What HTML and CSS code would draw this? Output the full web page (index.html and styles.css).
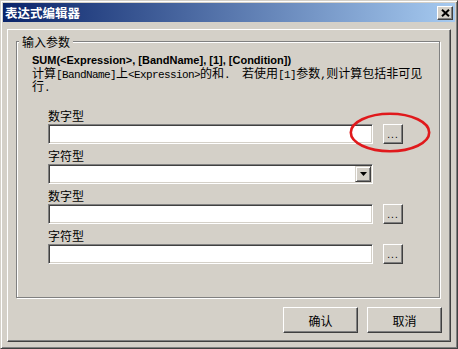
FILE: index.html
```html
<!DOCTYPE html>
<html lang="zh">
<head>
<meta charset="utf-8">
<title>表达式编辑器</title>
<link rel="stylesheet" href="styles.css">
</head>
<body>
<div class="window">
  <div class="titlebar">
    <span class="title">表达式编辑器</span>
    <button class="close" aria-label="关闭">
      <svg width="9" height="8" viewBox="0 0 9 8"><path d="M1 0.8 L8 7.2 M8 0.8 L1 7.2" stroke="#000" stroke-width="2" fill="none"/></svg>
    </button>
  </div>
  <div class="panel">
    <div class="group">
      <div class="legend">输入参数</div>
      <div class="sig">SUM(&lt;Expression&gt;, [BandName], [1], [Condition])</div>
      <div class="help">计算<span class="code">[BandName]</span>上<span class="code">&lt;Expression&gt;</span>的和<span class="code">.&nbsp; </span>若使用<span class="code">[1]</span>参数<span class="code">,</span>则计算包括非可见行<span class="code">.</span></div>
      <div class="fields">
        <div class="field">
          <div class="label">数字型</div>
          <div class="row"><div class="input"></div><button class="btn browse">...</button></div>
        </div>
        <div class="field">
          <div class="label">字符型</div>
          <div class="row"><div class="input combo"><span class="combo-btn"><svg width="7" height="4" viewBox="0 0 7 4"><path d="M0 0 H7 L3.5 4 Z" fill="#000"/></svg></span></div></div>
        </div>
        <div class="field">
          <div class="label">数字型</div>
          <div class="row"><div class="input"></div><button class="btn browse">...</button></div>
        </div>
        <div class="field">
          <div class="label">字符型</div>
          <div class="row"><div class="input"></div><button class="btn browse">...</button></div>
        </div>
      </div>
    </div>
    <div class="actions">
      <button class="btn action">确认</button>
      <button class="btn action">取消</button>
    </div>
  </div>
  <svg class="annot" width="82" height="41" viewBox="0 0 82 41"><ellipse cx="41" cy="20.5" rx="39.2" ry="18.7" fill="none" stroke="#e0191c" stroke-width="2.6"/></svg>
</div>
</body>
</html>
```
FILE: styles.css
```css
html, body {
  margin: 0;
  padding: 0;
  background: #d4d0c8;
}
body {
  font-family: "Noto Sans CJK SC", "Liberation Sans", sans-serif;
  font-size: 12px;
  color: #000;
}
.window {
  position: relative;
  width: 458px;
  height: 349px;
  box-sizing: border-box;
  border: 1px solid;
  border-color: #d4d0c8 #404040 #404040 #d4d0c8;
  box-shadow: inset 1px 1px #fff, inset -1px -1px #808080;
  padding: 2px;
  display: flex;
  flex-direction: column;
  background: #d4d0c8;
}
.titlebar {
  flex: none;
  height: 19px;
  display: flex;
  align-items: center;
  justify-content: space-between;
  padding: 0 2px;
  background: linear-gradient(to right, #0a246a, #a6caf0);
}
.title {
  color: #fff;
  font-weight: bold;
  font-size: 12.5px;
  line-height: 19px;
}
.close {
  width: 16px;
  height: 14px;
  padding: 0;
  margin: 0;
  border: 1px solid;
  border-color: #fff #404040 #404040 #fff;
  box-shadow: inset -1px -1px #808080;
  background: #d4d0c8;
  display: flex;
  align-items: center;
  justify-content: center;
}
.close svg { display: block; }
.panel {
  flex: 1;
  margin: 7px 4px 4px;
  border: 1px solid;
  border-color: #fff #404040 #404040 #fff;
  box-shadow: inset -1px -1px #808080;
  display: flex;
  flex-direction: column;
}
.group {
  position: relative;
  flex: none;
  height: 257px;
  box-sizing: border-box;
  margin: 11px 10px 0 8px;
  border: 1px solid #808080;
  box-shadow: inset 1px 1px #fff, 1px 1px #fff;
  padding: 12px 14px 0 15px;
}
.legend {
  position: absolute;
  top: -7px;
  left: 2px;
  padding: 0 3px;
  background: #d4d0c8;
  line-height: 14px;
}
.sig {
  font-family: "Liberation Sans", sans-serif;
  font-weight: bold;
  font-size: 11px;
  line-height: 12px;
  height: 12px;
}
.help {
  margin-top: 1px;
  line-height: 12px;
  height: 24px;
}
.code {
  font-family: "Liberation Mono", monospace;
  font-size: 11px;
  letter-spacing: -0.6px;
  line-height: 10px;
}
.fields {
  margin-top: 17px;
  padding-left: 16px;
  display: flex;
  flex-direction: column;
  gap: 4px;
}
.label {
  line-height: 16px;
  height: 16px;
}
.row {
  display: flex;
  gap: 10px;
  height: 20px;
}
.input {
  width: 325px;
  height: 20px;
  box-sizing: border-box;
  background: #fff;
  border: 1px solid;
  border-color: #808080 #fff #fff #808080;
  box-shadow: inset 1px 1px #404040, inset -1px -1px #d4d0c8;
}
.combo {
  display: flex;
  justify-content: flex-end;
  padding: 1px;
}
.combo-btn {
  width: 16px;
  height: 16px;
  box-sizing: border-box;
  background: #d4d0c8;
  border: 1px solid;
  border-color: #d4d0c8 #404040 #404040 #d4d0c8;
  box-shadow: inset 1px 1px #fff, inset -1px -1px #808080;
  display: flex;
  align-items: center;
  justify-content: center;
}
.combo-btn svg { display: block; }
.btn {
  margin: 0;
  padding: 0;
  box-sizing: border-box;
  background: #d4d0c8;
  border: 1px solid;
  border-color: #fff #404040 #404040 #fff;
  box-shadow: inset -1px -1px #808080;
  color: #000;
  font-family: "Noto Sans CJK SC", sans-serif;
  font-size: 12px;
}
.browse {
  width: 20px;
  height: 20px;
  font-family: "Liberation Sans", sans-serif;
  font-size: 10px;
  letter-spacing: 1px;
  line-height: 14px;
  padding-top: 2px;
}
.actions {
  display: flex;
  justify-content: flex-end;
  gap: 9px;
  margin: 9px 8px 0 0;
}
.action {
  width: 75px;
  height: 26px;
}
.annot {
  position: absolute;
  left: 348px;
  top: 111px;
}
```
